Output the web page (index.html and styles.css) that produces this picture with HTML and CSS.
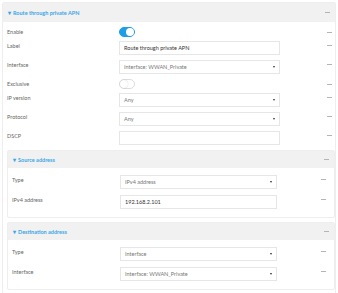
FILE: index.html
```html
<!DOCTYPE html>
<html lang="en">
<head>
    <meta charset="UTF-8">
    <meta name="viewport" content="width=device-width, initial-scale=1.0">
    <title>Route through private APN</title>
    <link rel="stylesheet" href="styles.css">
</head>
<body>
    <div class="panel">
        <div class="panel-head">
            <span class="title"><span class="caret">&#9662;</span>Route through private APN</span>
            <span class="dash"></span>
        </div>
        <div class="panel-body">
            <div class="row toggle-row">
                <span class="label">Enable</span>
                <span class="switch on"></span>
                <span class="dash"></span>
            </div>
            <div class="row">
                <span class="label">Label</span>
                <div class="field text">Route through private APN</div>
                <span class="dash"></span>
            </div>
            <div class="row">
                <span class="label">Interface</span>
                <div class="field select">Interface: WWAN_Private</div>
                <span class="dash"></span>
            </div>
            <div class="row toggle-row">
                <span class="label">Exclusive</span>
                <span class="switch"></span>
                <span class="dash"></span>
            </div>
            <div class="row">
                <span class="label">IP version</span>
                <div class="field select">Any</div>
                <span class="dash"></span>
            </div>
            <div class="row">
                <span class="label">Protocol</span>
                <div class="field select">Any</div>
                <span class="dash"></span>
            </div>
            <div class="row">
                <span class="label">DSCP</span>
                <div class="field text"></div>
                <span class="dash"></span>
            </div>

            <div class="panel sub">
                <div class="panel-head">
                    <span class="title"><span class="caret">&#9662;</span>Source address</span>
                    <span class="dash"></span>
                </div>
                <div class="panel-body">
                    <div class="row">
                        <span class="label">Type</span>
                        <div class="field select">IPv4 address</div>
                        <span class="dash"></span>
                    </div>
                    <div class="row">
                        <span class="label">IPv4 address</span>
                        <div class="field text">192.168.2.101</div>
                        <span class="dash"></span>
                    </div>
                </div>
            </div>

            <div class="panel sub">
                <div class="panel-head">
                    <span class="title"><span class="caret">&#9662;</span>Destination address</span>
                    <span class="dash"></span>
                </div>
                <div class="panel-body">
                    <div class="row">
                        <span class="label">Type</span>
                        <div class="field select">Interface</div>
                        <span class="dash"></span>
                    </div>
                    <div class="row">
                        <span class="label">Interface</span>
                        <div class="field select">Interface: WWAN_Private</div>
                        <span class="dash"></span>
                    </div>
                </div>
            </div>
        </div>
    </div>
</body>
</html>
```

FILE: styles.css
```css
body {
    margin: 0;
    padding: 2px 2px 0 2px;
    background-color: white;
    font-family: Lato, "Open Sans", sans-serif;
    font-size: 5.5px;
    color: #666;
}
.panel {
    border: 1px solid #eeeeee;
    border-radius: 2px;
}
.panel-head {
    display: flex;
    justify-content: space-between;
    align-items: center;
    height: 19px;
    padding: 0 5px 0 5px;
    background-color: #f1f1f1;
}
.title {
    color: #3aa6e6;
    font-weight: bold;
}
.caret {
    margin-right: 2px;
}
.panel-body {
    padding: 5px 0 3px 4px;
}
.row {
    display: grid;
    grid-template-columns: 112px 161px 1fr 5px;
    align-items: start;
    margin-bottom: 5px;
    padding-right: 3px;
}
.row .label {
    grid-column: 1;
    padding-top: 2px;
    line-height: 6px;
}
.row .field,
.row .switch {
    grid-column: 2;
}
.row .dash {
    grid-column: 4;
    margin-top: 4px;
}
.toggle-row {
    align-items: center;
    height: 10px;
    margin-bottom: 4px;
}
.toggle-row .label,
.toggle-row .dash {
    padding-top: 0;
    margin-top: 0;
}
.dash {
    display: block;
    width: 5px;
    height: 1px;
    background-color: #b4b4b4;
}
.field {
    box-sizing: border-box;
    height: 14px;
    border: 1px solid #e6e6e6;
    padding: 0 4px;
    line-height: 12px;
    color: #333;
}
.select {
    position: relative;
    color: #777;
}
.select::after {
    content: "";
    position: absolute;
    right: 4px;
    top: 5px;
    border-left: 1.5px solid transparent;
    border-right: 1.5px solid transparent;
    border-top: 2px solid #333;
}
.switch {
    display: block;
    box-sizing: border-box;
    width: 16px;
    height: 10px;
    border-radius: 5px;
    border: 1px solid #ddd;
    background-color: white;
    position: relative;
}
.switch::after {
    content: "";
    position: absolute;
    left: 0;
    top: 0;
    width: 8px;
    height: 8px;
    border-radius: 50%;
    background-color: white;
    box-shadow: 0 0 1px rgba(0, 0, 0, 0.3);
}
.switch.on {
    background-color: #1f9ee8;
    border-color: #1f9ee8;
}
.switch.on::after {
    left: 6px;
    box-shadow: none;
}
.sub {
    margin: 1px 0 4px 0;
}
.sub .panel-head {
    height: 17px;
}
.sub .panel-body {
    padding: 7px 0 2px 4px;
}
.sub .row {
    grid-template-columns: 108px 157px 1fr 5px;
    margin-bottom: 6px;
    padding-right: 8px;
}
```
